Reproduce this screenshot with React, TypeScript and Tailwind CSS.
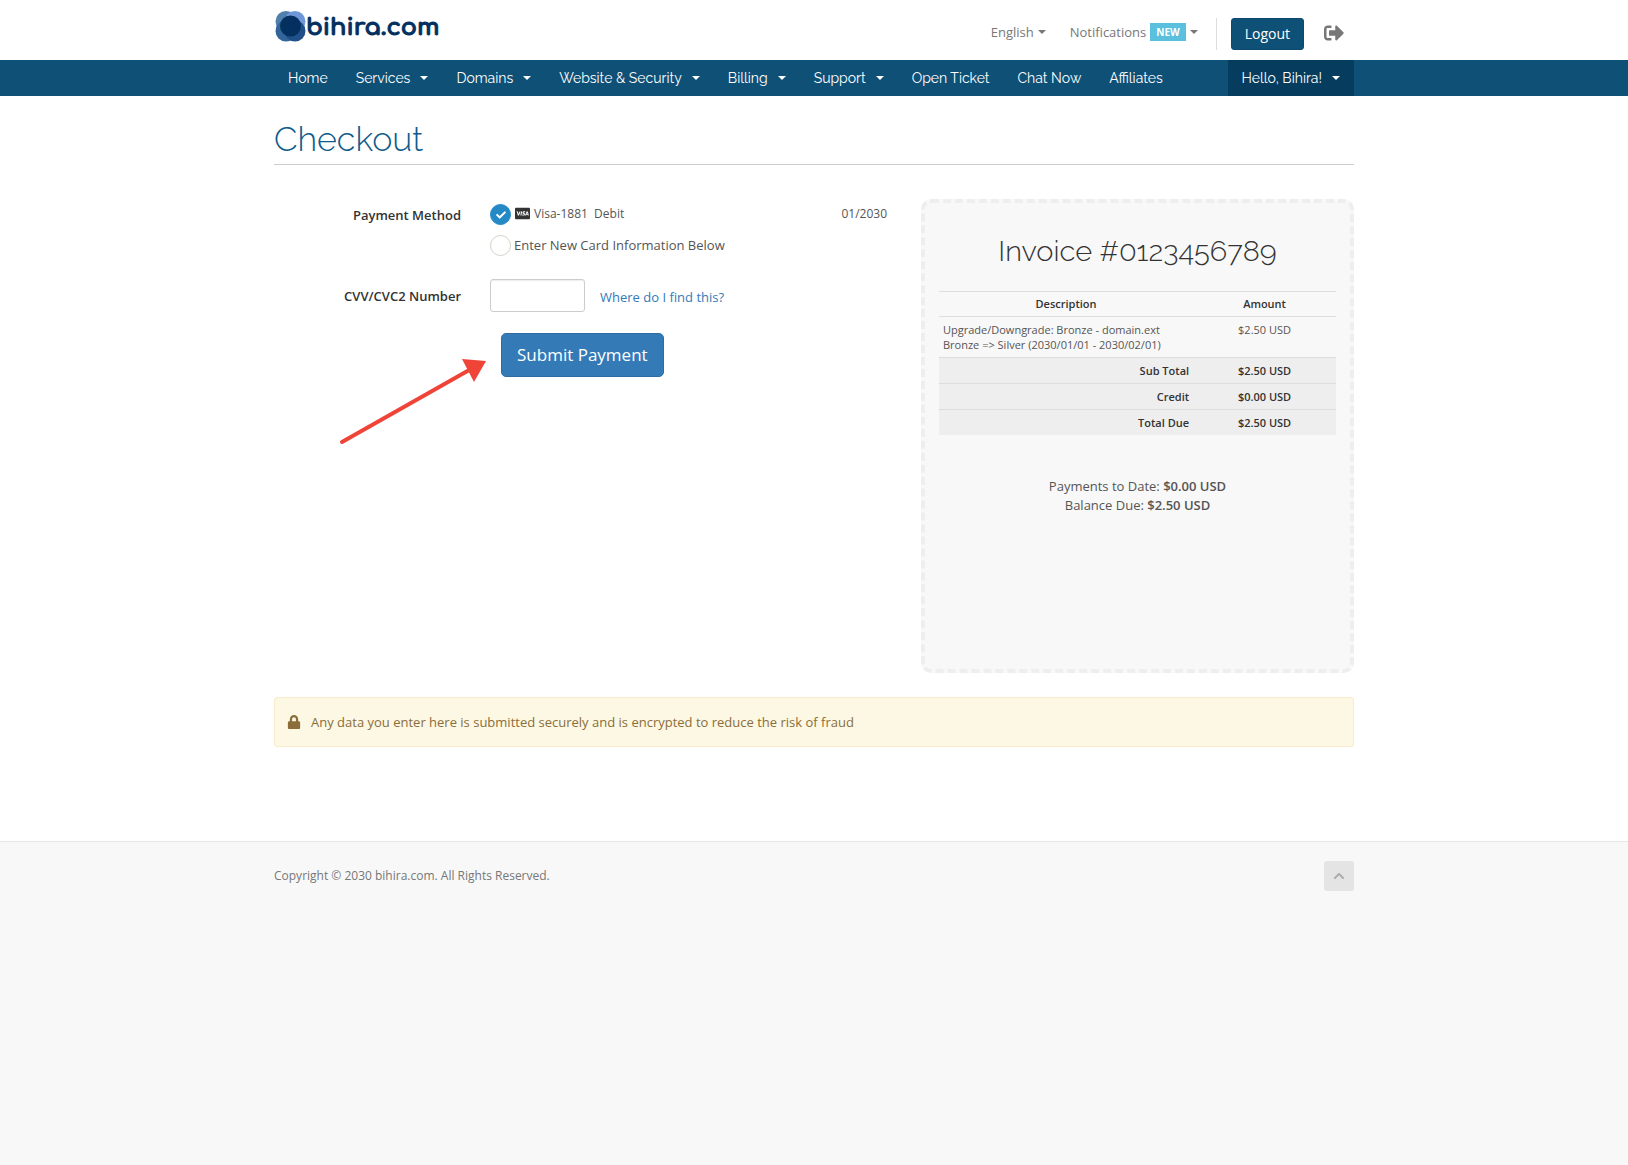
import { FaCheck, FaCcVisa, FaLock, FaSignOutAlt, FaChevronUp } from "react-icons/fa";

const navItems = [
  { label: "Home", menu: false },
  { label: "Services", menu: true },
  { label: "Domains", menu: true },
  { label: "Website & Security", menu: true },
  { label: "Billing", menu: true },
  { label: "Support", menu: true },
  { label: "Open Ticket", menu: false },
  { label: "Chat Now", menu: false },
  { label: "Affiliates", menu: false },
];

const totals = [
  { label: "Sub Total", amount: "$2.50 USD" },
  { label: "Credit", amount: "$0.00 USD" },
  { label: "Total Due", amount: "$2.50 USD" },
];

const container = "mx-auto w-full max-w-[1080px]";

function Caret() {
  return (
    <span
      aria-hidden="true"
      className="inline-block size-0 border-x-4 border-t-4 border-x-transparent border-t-current"
    />
  );
}

function Logo() {
  return (
    <a href="#" className="flex items-center text-[#03305f]">
      <svg width="32" height="32" viewBox="0 0 32 32" aria-hidden="true">
        <circle cx="12" cy="11.5" r="10.5" fill="#4f7fab" />
        <circle cx="21" cy="11.5" r="10.5" fill="#6f97d8" />
        <circle cx="12" cy="21" r="10.5" fill="#33649a" />
        <circle cx="21" cy="21" r="10.5" fill="#1f5088" />
        <circle cx="16.5" cy="16" r="10.5" fill="#03305f" />
      </svg>
      <span className="pt-1 font-[Comfortaa,Quicksand,Lato,sans-serif] text-2xl leading-8 font-bold [-webkit-text-stroke:1px_#03305f]">
        bihira.com
      </span>
    </a>
  );
}

function Header() {
  return (
    <header>
      <div className={`${container} flex h-[60px] items-start justify-between`}>
        <div className="pt-2">
          <Logo />
        </div>
        <div className="flex items-start pt-[18px] leading-7 text-[#777]">
          <button type="button" className="flex items-center gap-1">
            English <Caret />
          </button>
          <button type="button" className="ml-6 flex items-center gap-1">
            Notifications
            <span className="bg-[#5bc0de] px-1.5 text-[10px] leading-[18px] font-bold text-white">NEW</span>
            <Caret />
          </button>
          <div className="ml-[18px] border-l border-[#ddd] pl-3.5">
            <button
              type="button"
              className="block rounded-[3px] border border-[#0e4a70] bg-[#0f5077] px-[13px] text-sm leading-[30px] text-white"
            >
              Logout
            </button>
          </div>
          <button type="button" aria-label="Sign out" className="mr-2.5 ml-5 flex h-[30px] items-center">
            <FaSignOutAlt className="size-5" />
          </button>
        </div>
      </div>
      <nav className="bg-[#0f5077] font-[Raleway,Lato,sans-serif] text-sm leading-9 text-white">
        <div className={`${container} flex justify-between`}>
          <ul className="flex">
            {navItems.map((item) => (
              <li key={item.label}>
                <a href="#" className="flex items-center gap-2.5 px-3.5">
                  {item.label}
                  {item.menu && <Caret />}
                </a>
              </li>
            ))}
          </ul>
          <a href="#" className="flex items-center gap-2.5 bg-[#063c5e] px-3.5">
            Hello, Bihira! <Caret />
          </a>
        </div>
      </nav>
    </header>
  );
}

const radio =
  "size-[21px] appearance-none rounded-full border border-[#d2d2c8] bg-white checked:border-[#2489c5] checked:bg-[#2489c5]";

function PaymentForm() {
  return (
    <form className="relative flex-1 pr-[34px]" onSubmit={(e) => e.preventDefault()}>
      <div className="flex gap-[29px]">
        <span id="method" className="w-[187px] pt-1.5 text-right font-semibold text-[#333]">
          Payment Method
        </span>
        <div role="radiogroup" aria-labelledby="method" className="flex-1">
          <div className="flex h-[31px] items-center justify-between text-xs">
            <label className="flex items-center">
              <span className="relative mr-1 flex">
                <input type="radio" name="card" defaultChecked className={radio} />
                <FaCheck className="pointer-events-none absolute inset-0 m-auto size-2.5 text-white" />
              </span>
              <span className="flex items-center gap-1 pb-0.5">
                <FaCcVisa className="size-[15px] text-[#333]" />
                <span className="whitespace-pre">Visa-1881&nbsp; Debit</span>
              </span>
            </label>
            <span className="pb-0.5">01/2030</span>
          </div>
          <label className="flex h-[31px] items-center gap-[3px]">
            <input type="radio" name="card" className={radio} />
            <span className="pb-0.5">Enter New Card Information Below</span>
          </label>
        </div>
      </div>
      <div className="mt-[18px] flex items-center gap-[29px]">
        <label htmlFor="cvv" className="w-[187px] text-right font-semibold text-[#333]">
          CVV/CVC2 Number
        </label>
        <div className="flex items-center gap-[15px]">
          <input
            id="cvv"
            type="text"
            className="h-[33px] w-[95px] rounded-[3px] border border-[#ccc] bg-white px-3 shadow-[inset_0_1px_1px_rgba(0,0,0,0.075)]"
          />
          <a href="#" className="pt-0.5 text-[#337ab7]">
            Where do I find this?
          </a>
        </div>
      </div>
      <button
        type="submit"
        className="mt-[21px] ml-[227px] block rounded-[5px] border border-[#2e6da4] bg-[#337ab7] px-[15px] text-[17px] leading-[42px] text-white"
      >
        Submit Payment
      </button>
      <svg
        width="148"
        height="86"
        viewBox="0 0 148 86"
        aria-hidden="true"
        className="pointer-events-none absolute top-[160px] left-[65px]"
      >
        <path d="M3 83 L132 10" stroke="#f04438" strokeWidth="4" strokeLinecap="round" />
        <path d="M123 0 L147 2 L135 23 Z" fill="#f04438" />
      </svg>
    </form>
  );
}

function Invoice() {
  return (
    <section className="min-h-[474px] w-[433px] rounded-[10px] border-4 border-dashed border-[#eee] bg-[#f8f8f8] px-3.5 pt-7 text-center">
      <h2 className="font-[Raleway,Lato,sans-serif] text-[29px] leading-10 font-light text-[#333] oldstyle-nums">
        Invoice #0123456789
      </h2>
      <table className="mt-5 w-full border-collapse text-[11px] leading-[15px]">
        <thead>
          <tr className="border-y border-[#ddd] leading-[14px] text-[#333]">
            <th className="w-[64%] px-1 py-[5px] font-semibold">Description</th>
            <th className="px-1 py-[5px] font-semibold">Amount</th>
          </tr>
        </thead>
        <tbody>
          <tr className="border-b border-[#ddd] align-top">
            <td className="px-1 py-[5px] text-left">
              Upgrade/Downgrade: Bronze - domain.ext
              <br />
              Bronze =&gt; Silver (2030/01/01 - 2030/02/01)
            </td>
            <td className="px-1 py-[5px]">$2.50 USD</td>
          </tr>
          {totals.map((row) => (
            <tr key={row.label} className="border-b border-[#ddd] bg-[#eee] text-[#333] last:border-0">
              <th className="px-1 py-[5px] text-right font-semibold">{row.label}</th>
              <td className="px-1 py-[5px] font-semibold">{row.amount}</td>
            </tr>
          ))}
        </tbody>
      </table>
      <p className="mt-[42px] leading-[19px]">
        Payments to Date: <strong className="font-semibold">$0.00 USD</strong>
        <br />
        Balance Due: <strong className="font-semibold">$2.50 USD</strong>
      </p>
    </section>
  );
}

export default function App() {
  return (
    <div className="flex min-h-screen flex-col bg-white font-['Open_Sans',sans-serif] text-[13px] leading-5 text-[#555]">
      <Header />
      <main className={`${container} pb-[94px]`}>
        <h1 className="border-b border-[#ccc] pt-[23px] pb-[5px] font-[Raleway,Lato,sans-serif] text-[34px] leading-10 font-light text-[#0f5c8c]">
          Checkout
        </h1>
        <div className="mt-[34px] flex">
          <PaymentForm />
          <Invoice />
        </div>
        <div
          role="note"
          className="mt-6 flex items-center gap-2.5 rounded-[3px] border border-[#faebcc] bg-[#fcf8e3] px-3 py-3.5 text-[#8a6d3b]"
        >
          <FaLock className="size-3.5" />
          Any data you enter here is submitted securely and is encrypted to reduce the risk of fraud
        </div>
      </main>
      <footer className="flex-1 border-t border-[#e7e7e7] bg-[#f8f8f8] pt-[19px]">
        <div className={`${container} flex items-center justify-between text-xs text-[#777]`}>
          <p>Copyright © 2030 bihira.com. All Rights Reserved.</p>
          <button
            type="button"
            aria-label="Back to top"
            className="flex size-[30px] items-center justify-center rounded-[3px] bg-[#e4e4e4] text-[#aaa]"
          >
            <FaChevronUp className="size-3" />
          </button>
        </div>
      </footer>
    </div>
  );
}
